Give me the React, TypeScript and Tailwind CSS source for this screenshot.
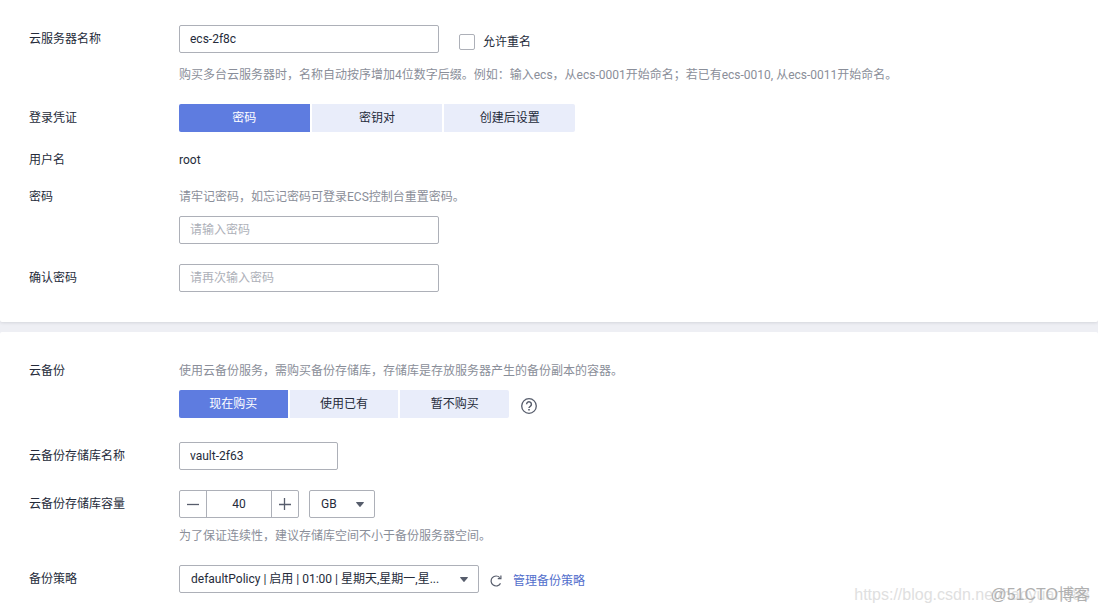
import { useState } from 'react'
import type { ReactNode } from 'react'

const loginModes = ['密码', '密钥对', '创建后设置']
const backupModes = ['现在购买', '使用已有', '暂不购买']

const inputClass =
  'h-7 rounded-xs border border-[#adb0b8] bg-white px-2.5 text-xs text-[#252b3a] placeholder:text-[#adb0b8] focus:border-[#5e7ce0] focus:outline-none'

function Row({ label, htmlFor, className, children }: {
  label: string
  htmlFor?: string
  className?: string
  children: ReactNode
}) {
  return (
    <div className={`flex items-start ${className ?? ''}`}>
      <label htmlFor={htmlFor} className="w-[150px] shrink-0">
        {label}
      </label>
      <div className="min-w-0 flex-1">{children}</div>
    </div>
  )
}

function Tabs({ items, className }: { items: string[]; className: string }) {
  const [active, setActive] = useState(items[0])

  return (
    <div className={`grid grid-cols-3 gap-0.5 ${className}`}>
      {items.map((item) => (
        <button
          key={item}
          type="button"
          aria-pressed={active === item}
          onClick={() => setActive(item)}
          className={
            active === item
              ? 'h-7 bg-[#5e7ce0] text-white first:rounded-l-xs last:rounded-r-xs'
              : 'h-7 bg-[#e9edfa] text-[#252b3a] first:rounded-l-xs last:rounded-r-xs'
          }
        >
          {item}
        </button>
      ))}
    </div>
  )
}

function Select({ id, label, options, className }: {
  id: string
  label: string
  options: string[]
  className: string
}) {
  return (
    <div className={`relative ${className}`}>
      <select
        id={id}
        aria-label={label}
        className="h-7 w-full appearance-none rounded-xs border border-[#adb0b8] bg-white pr-6 pl-[11px] text-xs text-[#252b3a] focus:outline-none"
      >
        {options.map((o) => (
          <option key={o}>{o}</option>
        ))}
      </select>
      <svg viewBox="0 0 8 5" className="pointer-events-none absolute top-3 right-[11px] h-[5px] w-2" fill="#575d6c">
        <path d="M0 .4Q0 0 .5 0h7Q8 0 8 .4L4.400 4.800Q4 5.200 3.600 4.800Z" />
      </svg>
    </div>
  )
}

function Hint({ className, children }: { className?: string; children: ReactNode }) {
  return <p className={`text-[#8a8e99] ${className ?? ''}`}>{children}</p>
}

export default function App() {
  const [name, setName] = useState('ecs-2f8c')
  const [vault, setVault] = useState('vault-2f63')
  const [size, setSize] = useState(40)

  return (
    <main className="relative min-h-screen overflow-hidden bg-[#eeeff4] font-['Roboto','Noto_Sans_CJK_SC',sans-serif] text-xs leading-[18px] text-[#252b3a]">
      <section className="rounded-b-xs bg-white px-[29px] pt-[25px] pb-[30px] shadow-[0_1px_3px_rgba(37,43,58,0.12)]">
        <Row label="云服务器名称" htmlFor="name" className="[&>label]:pt-[5px]">
          <div className="flex items-start gap-5">
            <input id="name" value={name} onChange={(e) => setName(e.target.value)} className={`w-[260px] ${inputClass}`} />
            <label className="mt-2 flex items-center gap-2">
              <input type="checkbox" className="size-4 appearance-none rounded-xs border border-[#adb0b8] bg-white checked:bg-[#5e7ce0]" />
              允许重名
            </label>
          </div>
          <Hint className="mt-[13px]">
            购买多台云服务器时，名称自动按序增加4位数字后缀。例如：输入ecs，从ecs-0001开始命名；若已有ecs-0010, 从ecs-0011开始命名。
          </Hint>
        </Row>

        <Row label="登录凭证" className="mt-5 [&>label]:pt-[5px]">
          <Tabs items={loginModes} className="w-[396px]" />
        </Row>

        <Row label="用户名" className="mt-[19px]">
          root
        </Row>

        <Row label="密码" htmlFor="password" className="mt-[19px]">
          <Hint>请牢记密码，如忘记密码可登录ECS控制台重置密码。</Hint>
          <input id="password" type="password" placeholder="请输入密码" className={`mt-2.5 block w-[260px] ${inputClass}`} />
        </Row>

        <Row label="确认密码" htmlFor="confirm" className="mt-5 [&>label]:pt-[5px]">
          <input id="confirm" type="password" placeholder="请再次输入密码" className={`block w-[260px] ${inputClass}`} />
        </Row>
      </section>

      <section className="mt-2.5 rounded-t-xs bg-white px-[29px] pt-[30px] pb-5">
        <Row label="云备份">
          <Hint>使用云备份服务，需购买备份存储库，存储库是存放服务器产生的备份副本的容器。</Hint>
          <div className="mt-2.5 flex items-start gap-3">
            <Tabs items={backupModes} className="w-[330px]" />
            <button type="button" aria-label="帮助" className="mt-2">
              <svg viewBox="0 0 16 16" className="size-4" fill="none" stroke="#575d6c" strokeWidth="1.3">
                <circle cx="8" cy="8" r="7.3" />
                <path d="M5.600 6.300a2.400 2.400 0 1 1 3.700 2C8.400 8.900 8 9.200 8 10" strokeWidth="1.5" />
                <path d="M8 11v1.500" strokeWidth="1.6" />
              </svg>
            </button>
          </div>
        </Row>

        <Row label="云备份存储库名称" htmlFor="vault" className="mt-6 [&>label]:pt-[5px]">
          <input id="vault" value={vault} onChange={(e) => setVault(e.target.value)} className={`block w-[159px] ${inputClass}`} />
        </Row>

        <Row label="云备份存储库容量" htmlFor="size" className="mt-5 [&>label]:pt-[5px]">
          <div className="flex gap-2.5">
            <div className="flex h-7 w-[120px] rounded-xs border border-[#adb0b8]">
              <button
                type="button"
                aria-label="减少"
                onClick={() => setSize(size - 1)}
                className="flex w-[27px] items-center justify-center border-r border-[#adb0b8]"
              >
                <svg viewBox="0 0 12 12" className="size-3" stroke="#575d6c" strokeWidth="1.3">
                  <path d="M0 6.500h12" />
                </svg>
              </button>
              <input
                id="size"
                value={size}
                onChange={(e) => setSize(Number(e.target.value) || 0)}
                className="min-w-0 flex-1 text-center text-xs focus:outline-none"
              />
              <button
                type="button"
                aria-label="增加"
                onClick={() => setSize(size + 1)}
                className="flex w-[27px] items-center justify-center border-l border-[#adb0b8]"
              >
                <svg viewBox="0 0 12 12" className="size-3" stroke="#575d6c" strokeWidth="1.3">
                  <path d="M0 6.500h12M5.500 0v12" />
                </svg>
              </button>
            </div>
            <Select id="unit" label="单位" options={['GB', 'TB']} className="w-[66px]" />
          </div>
          <Hint className="mt-[9px]">为了保证连续性，建议存储库空间不小于备份服务器空间。</Hint>
        </Row>

        <Row label="备份策略" htmlFor="policy" className="mt-5 [&>label]:pt-[5px]">
          <div className="flex items-start">
            <Select
              id="policy"
              label="备份策略"
              options={['defaultPolicy | 启用 | 01:00 | 星期天,星期一,星...']}
              className="w-[300px]"
            />
            <button type="button" aria-label="刷新" className="mt-2.5 ml-[11px]">
              <svg viewBox="0 0 12 12" className="size-3" fill="none" stroke="#575d6c" strokeWidth="1.2">
                <path d="M10.500 8.400A5 5 0 1 1 9.800 2.600" />
                <path d="M10.900 .6v3.100H7.800" />
              </svg>
            </button>
            <a href="#policy" className="mt-[7px] ml-[11px] text-[#526ecc]">
              管理备份策略
            </a>
          </div>
        </Row>
      </section>

      <div className="pointer-events-none absolute right-2 bottom-2 font-['Liberation_Sans','Noto_Sans_CJK_SC',sans-serif] text-base leading-5">
        <span className="absolute right-0 bottom-0 text-[#e0e0e0]">https://blog.csdn.net/haoyuan888</span>
        <span className="relative text-[#b0b0b0]">@51CTO博客</span>
      </div>
    </main>
  )
}
